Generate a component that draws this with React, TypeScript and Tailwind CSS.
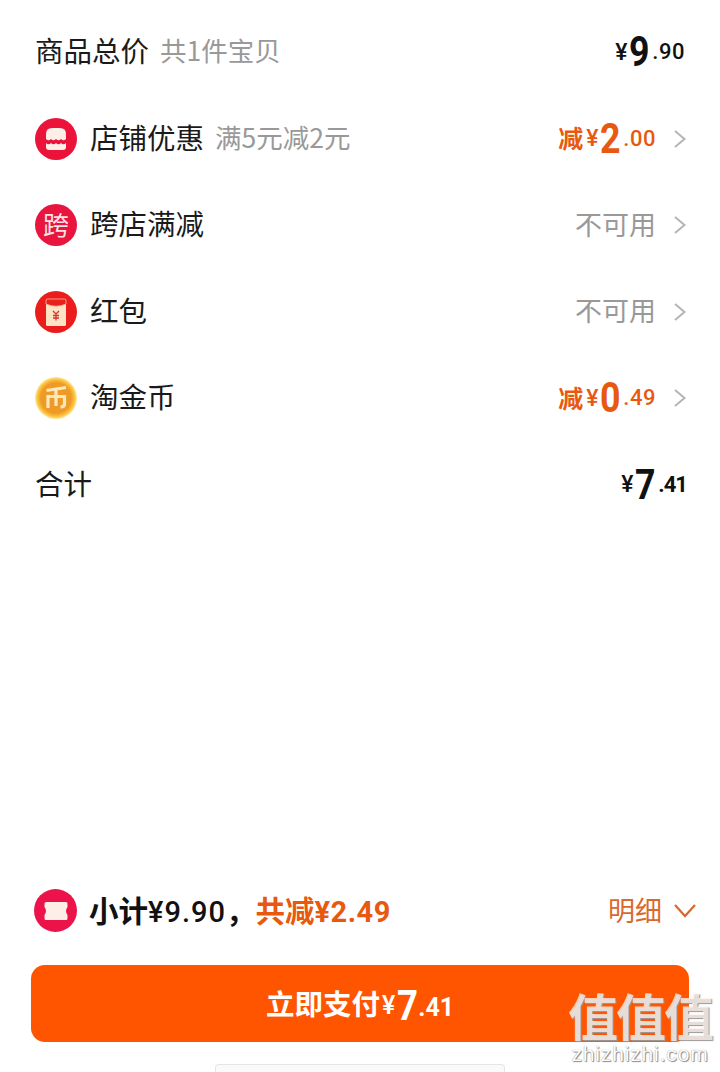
import type { ReactNode } from "react";

const cjk = "font-['Noto_Sans_CJK_SC',sans-serif]";
const digits = "font-['Roboto','Noto_Sans_CJK_SC',sans-serif]";

// the big digit is a condensed face in the app, Roboto squeezed comes closest
function BigDigit({ value, size }: { value: string; size: string }) {
  return (
    <span className={`inline-block w-[20px] origin-left scale-x-[0.85] leading-none ${size}`}>{value}</span>
  );
}

function Price({
  big,
  cents,
  prefix,
  color,
  centsClass = "font-medium tracking-[0.5px]",
}: {
  big: string;
  cents: string;
  prefix?: string;
  color: string;
  centsClass?: string;
}) {
  return (
    <div className={`flex items-center font-bold ${digits} ${color}`}>
      {prefix && <span className={`pb-[2px] text-[25px] leading-none ${cjk}`}>{prefix}</span>}
      <span className="ml-[3px] text-[23px] leading-none font-medium">¥</span>
      <span className="ml-[2px] flex">
        <BigDigit value={big} size="text-[42px]" />
      </span>
      <span className={`ml-[3px] text-[22px] leading-none ${centsClass}`}>.{cents}</span>
    </div>
  );
}

function Row({ icon, label, note, right }: { icon?: ReactNode; label: string; note?: string; right: ReactNode }) {
  return (
    <div className="flex h-[86.5px] items-center justify-between">
      <div className="flex items-center">
        {icon && <div className="mr-[13px] h-[42px] w-[42px] shrink-0">{icon}</div>}
        <span className="pb-[4px] text-[28.5px] leading-none text-[#1a1a1a]">{label}</span>
        {note && <span className="ml-[11px] pb-[4px] text-[26.5px] leading-none text-[#999999]">{note}</span>}
      </div>
      {right}
    </div>
  );
}

function Trailing({ children }: { children: ReactNode }) {
  return (
    <div className="flex items-center">
      {children}
      <svg viewBox="0 0 14 20" className="mr-[-2px] ml-[17px] h-[20px] w-[14px]">
        <path d="M2 2 L11.5 10 L2 18" fill="none" stroke="#b5b5b5" strokeWidth="2" />
      </svg>
    </div>
  );
}

function ShopIcon() {
  return (
    <svg viewBox="0 0 42 42" className="h-full w-full">
      <circle cx="21" cy="21" r="21" fill="#eb1339" />
      <path d="M11 21 L11 16 Q11 10 17 10 L25 10 Q31 10 31 16 L31 21 Q28.5 23.5 26 21 Q23.5 23.5 21 21 Q18.5 23.5 16 21 Q13.5 23.5 11 21 Z" fill="#fdeee8" />
      <path d="M11 25 Q13.5 27.5 16 25 Q18.5 27.5 21 25 Q23.5 27.5 26 25 Q28.5 27.5 31 25 L31 29 Q31 32 28 32 L14 32 Q11 32 11 29 Z" fill="#fdeee8" />
    </svg>
  );
}

function CrossIcon() {
  return (
    <div className="flex h-full w-full items-center justify-center rounded-full bg-[#e8153f] pb-[2px] text-[26px] leading-none text-[#fde3e3]">
      跨
    </div>
  );
}

function RedPacketIcon() {
  return (
    <svg viewBox="0 0 42 42" className="h-full w-full">
      <circle cx="21" cy="21" r="21" fill="#ea1c1c" />
      <rect x="11" y="8" width="20" height="27" rx="1.5" fill="#fbe3c4" />
      <path d="M11 9.5 Q11 8 12.5 8 L29.5 8 Q31 8 31 9.5 L31 13 Q21 17.5 11 13 Z" fill="#e8211f" stroke="#f7b9a0" strokeWidth="0.8" />
      <path d="M18 20 L21 23 L24 20 M21 23 L21 29.5 M18 24.5 L24 24.5 M18 27 L24 27" stroke="#d8342c" strokeWidth="1.3" fill="none" />
    </svg>
  );
}

function CoinIcon() {
  return (
    <svg viewBox="0 0 42 42" className="h-full w-full">
      <defs>
        <radialGradient id="coinFill" cx="50%" cy="50%" r="50%">
          <stop offset="0%" stopColor="#ef9a2a" />
          <stop offset="72%" stopColor="#ee9a26" />
          <stop offset="88%" stopColor="#fcc23d" />
          <stop offset="100%" stopColor="#ffe9a0" />
        </radialGradient>
      </defs>
      <circle cx="21" cy="21" r="21" fill="url(#coinFill)" />
      <path
        d="M11.5 13.5 Q21 12 31 10.5 M21 12.5 L21 29 M13 31 L13 19.5 L29.5 19.5 L29.5 27 Q29.5 30 25.5 30"
        stroke="#fde8bd"
        strokeWidth="3.2"
        fill="none"
      />
    </svg>
  );
}

function TicketIcon() {
  return (
    <svg viewBox="0 0 43 43" className="h-full w-full">
      <circle cx="21.5" cy="21.5" r="21.5" fill="#eb1349" />
      <path
        d="M12 13 L32 13 Q33.5 13 33.5 14.5 L33.5 18 Q30.5 22 33.5 26 L33.5 29.5 Q33.5 31 32 31 L12 31 Q10.5 31 10.5 29.5 L10.5 26 Q13.5 22 10.5 18 L10.5 14.5 Q10.5 13 12 13 Z"
        fill="#fdeee8"
      />
    </svg>
  );
}

export default function App() {
  return (
    <div className={`relative flex h-[1072px] w-[720px] flex-col overflow-hidden bg-white ${cjk}`}>
      <div className="px-[35px] pt-[9px]">
        <Row
          label="商品总价"
          note="共1件宝贝"
          right={<Price big="9" cents="90" color="text-[#111111]" />}
        />
        <Row
          icon={<ShopIcon />}
          label="店铺优惠"
          note="满5元减2元"
          right={
            <Trailing>
              <Price prefix="减" big="2" cents="00" color="text-[#e8590f]" />
            </Trailing>
          }
        />
        <Row
          icon={<CrossIcon />}
          label="跨店满减"
          right={
            <Trailing>
              <span className="pb-[4px] text-[27px] leading-none text-[#999999]">不可用</span>
            </Trailing>
          }
        />
        <Row
          icon={<RedPacketIcon />}
          label="红包"
          right={
            <Trailing>
              <span className="pb-[4px] text-[27px] leading-none text-[#999999]">不可用</span>
            </Trailing>
          }
        />
        <Row
          icon={<CoinIcon />}
          label="淘金币"
          right={
            <Trailing>
              <Price prefix="减" big="0" cents="49" color="text-[#e8590f]" />
            </Trailing>
          }
        />
        <Row
          label="合计"
          right={
            <Price
              big="7"
              cents="41"
              color="text-[#111111]"
              centsClass="mr-[-2px] font-bold tracking-[-1px]"
            />
          }
        />
      </div>

      <div className="mt-auto flex items-center justify-between pr-[23px] pl-[34px]">
        <div className="flex items-center">
          <div className="mr-[12px] h-[43px] w-[43px]">
            <TicketIcon />
          </div>
          <span className="text-[29.5px] leading-none font-bold text-[#111111]">
            小计<span className={`${digits} text-[29px] font-medium tracking-[1px]`}>¥9.90</span>，
          </span>
          <span className="text-[29.5px] leading-none font-bold text-[#e8590f]">
            共减<span className={`${digits} text-[29px] font-bold tracking-[0.5px]`}>¥2.49</span>
          </span>
        </div>
        <div className="flex items-center text-[#d9692d]">
          <span className="pb-[2px] text-[27px] leading-none">明细</span>
          <svg viewBox="0 0 24 16" className="ml-[11px] h-[16px] w-[24px]">
            <path d="M2 2 L12 13 L22 2" fill="none" stroke="#d9692d" strokeWidth="2.2" />
          </svg>
        </div>
      </div>

      <div className="mx-[31px] mt-[33px] flex h-[77px] items-center justify-center rounded-[14px] bg-[#ff5500] pt-[3px] text-white">
        <div className={`flex items-center font-bold ${digits}`}>
          <span className={`pb-[4px] text-[28.5px] leading-none ${cjk}`}>立即支付</span>
          <span className="ml-[2px] text-[25px] leading-none font-medium">¥</span>
          <span className="ml-[2px] flex">
            <BigDigit value="7" size="text-[43px]" />
          </span>
          <span className="ml-[1px] pt-[4px] text-[25px] leading-none">.41</span>
        </div>
      </div>

      <div className="mt-[22px] h-[8px] w-[290px] self-center rounded-t-[4px] border border-b-0 border-[#e6e6e6] bg-[#fafafa]" />

      <div className="absolute right-[8px] bottom-[8px] flex flex-col items-center">
        <span className="mb-[3px] text-[50px] leading-[54px] font-bold tracking-[-2px] text-[#fff3ec]/75 [text-shadow:1px_1px_1px_#9a9a9a]">
          值值值
        </span>
        <span className="text-[21px] leading-[20px] tracking-[0.85px] text-white [font-family:'Liberation_Sans',sans-serif] [text-shadow:0_0_1px_#777,1px_1px_1px_#8a8a8a]">
          zhizhizhi.com
        </span>
      </div>
    </div>
  );
}
